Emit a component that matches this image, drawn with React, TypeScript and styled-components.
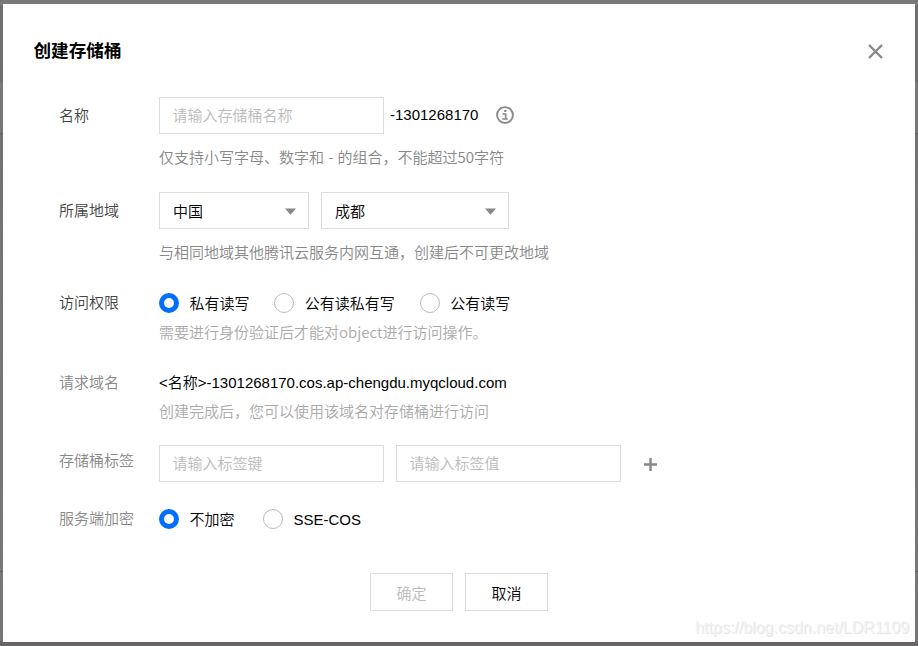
import React, { useState } from "react";
import styled, { createGlobalStyle } from "styled-components";

const GlobalStyle = createGlobalStyle`
  * { box-sizing: border-box; }
  html, body { margin: 0; padding: 0; }
  body {
    font-family: "Liberation Sans", "Noto Sans CJK SC", sans-serif;
    font-size: 15px;
    font-weight: 350;
    line-height: 20px;
    color: #000;
  }
`;

const Backdrop = styled.div`
  width: 918px;
  height: 646px;
  padding: 4px 3px;
  overflow: hidden;
  background: linear-gradient(
    to bottom,
    #777 0, #7b7b7b 6px, #686868 6px, #686868 7px, #707070 7px, #6f6f6f 82px,
    #777 82px, #777 133px, #626262 133px, #626262 134px, #737373 134px,
    #777 571px, #636363 571px, #636363 572px, #777 572px, #757575 641px,
    #656263 642px, #6a6869 646px
  );
`;

const Dialog = styled.section`
  width: 912px;
  height: 638px;
  background: #fff;
  position: relative;
`;

const Header = styled.header`
  display: flex;
  justify-content: space-between;
  align-items: center;
  height: 93px;
  padding: 0 32px 0 30.5px;
`;

const Title = styled.h1`
  margin: 0;
  font-size: 17.6px;
  line-height: 24px;
  font-weight: 700;
`;

const IconButton = styled.button`
  display: flex;
  padding: 1px 0 0;
  border: 0;
  background: none;
  cursor: pointer;
`;

const Form = styled.form`
  padding-left: 56px;
`;

const Row = styled.div<{ $height: number }>`
  display: grid;
  grid-template-columns: 100px 1fr;
  height: ${(p) => p.$height}px;
`;

const Label = styled.div<{ $top: number; $muted?: boolean }>`
  padding-top: ${(p) => p.$top}px;
  color: ${(p) => (p.$muted ? "#888" : "#444")};
`;

const Line = styled.div<{ $height?: number }>`
  display: flex;
  align-items: center;
  height: ${(p) => p.$height ?? 37}px;
`;

const Hint = styled.p<{ $top: number; $light?: boolean }>`
  margin: ${(p) => p.$top}px 0 0;
  font-family: "Noto Sans CJK SC", sans-serif;
  word-spacing: 0.8px;
  color: ${(p) => (p.$light ? "#aaa" : "#888")};
  white-space: nowrap;
`;

const TextInput = styled.input`
  width: 225px;
  height: 37px;
  margin-right: 12px;
  padding: 0 12.5px;
  border: 1px solid #ddd;
  border-radius: 0;
  outline: 0;
  font: inherit;
  &::placeholder { color: #bbb; opacity: 1; }
`;

const Suffix = styled.span`
  width: 106px;
  margin-left: -6px;
  padding-bottom: 2px;
`;

const InfoIcon = styled.svg`
  margin-bottom: 1px;
`;

const Select = styled.div<{ $width: number }>`
  display: flex;
  align-items: center;
  justify-content: space-between;
  width: ${(p) => p.$width}px;
  height: 37px;
  margin-right: 12px;
  padding: 2px 12px 0 13px;
  border: 1px solid #ddd;
`;

const Radio = styled.label<{ $gap: number }>`
  display: flex;
  align-items: center;
  margin-right: ${(p) => p.$gap}px;
  cursor: pointer;
`;

const RadioText = styled.span`
  padding-top: 2px;
`;

const RadioDot = styled.input`
  appearance: none;
  width: 20px;
  height: 20px;
  margin: 0 10.4px 0 0;
  border: 1px solid #bbb;
  border-radius: 50%;
  background: #fff;
  &:checked { border: 5px solid #006eff; }
`;

const Footer = styled.footer`
  display: flex;
  justify-content: center;
  gap: 12px;
`;

const Button = styled.button`
  width: 83px;
  height: 38px;
  padding: 3px 0 0;
  border: 1px solid #ddd;
  background: #fff;
  color: #000;
  font: inherit;
  &:disabled { color: #bbb; }
`;

const Watermark = styled.div`
  position: absolute;
  right: 6px;
  bottom: 4px;
  font-size: 16px;
  line-height: 20px;
  color: #f4f4f4;
  text-shadow: 1px 1px 0 #e6e6e6;
`;

const Arrow = () => (
  <svg width="11" height="7" viewBox="0 0 11 7" fill="#888"><path d="M0 .5h11L5.5 6.7z" /></svg>
);

function RadioGroup({ name, options, gap }: { name: string; options: string[]; gap: number }) {
  const [value, setValue] = useState(options[0]);
  return (
    <>
      {options.map((o) => (
        <Radio key={o} $gap={gap}>
          <RadioDot type="radio" name={name} checked={value === o} onChange={() => setValue(o)} />
          <RadioText>{o}</RadioText>
        </Radio>
      ))}
    </>
  );
}

export default function App() {
  return (
    <Backdrop>
      <GlobalStyle />
      <Dialog>
        <Header>
          <Title>创建存储桶</Title>
          <IconButton aria-label="关闭">
            <svg width="15" height="15" viewBox="0 0 15 15" stroke="#888" strokeWidth="2.4">
              <path d="M1 1l13 13M14 1L1 14" />
            </svg>
          </IconButton>
        </Header>
        <Form onSubmit={(e) => e.preventDefault()}>
          <Row $height={95}>
            <Label $top={9}>名称</Label>
            <div>
              <Line>
                <TextInput placeholder="请输入存储桶名称" />
                <Suffix>-1301268170</Suffix>
                <InfoIcon width="18" height="18" viewBox="0 0 18 18" fill="none" stroke="#888">
                  <circle cx="9" cy="9" r="7.9" strokeWidth="1.9" />
                  <path d="M6.5 8h3.2v5M6.3 13h5.4" strokeWidth="1.7" />
                  <path d="M9.3 4v2" strokeWidth="2.2" />
                </InfoIcon>
              </Line>
              <Hint $top={13}>仅支持小写字母、数字和 - 的组合，不能超过50字符</Hint>
            </div>
          </Row>
          <Row $height={96}>
            <Label $top={9}>所属地域</Label>
            <div>
              <Line>
                <Select $width={150}>中国<Arrow /></Select>
                <Select $width={188}>成都<Arrow /></Select>
              </Line>
              <Hint $top={13}>与相同地域其他腾讯云服务内网互通，创建后不可更改地域</Hint>
            </div>
          </Row>
          <Row $height={80}>
            <Label $top={5}>访问权限</Label>
            <div>
              <Line $height={30}>
                <RadioGroup name="access" gap={25} options={["私有读写", "公有读私有写", "公有读写"]} />
              </Line>
              <Hint $top={4} $light>需要进行身份验证后才能对object进行访问操作。</Hint>
            </div>
          </Row>
          <Row $height={77}>
            <Label $top={5} $muted>请求域名</Label>
            <div>
              <Line $height={30}>&lt;名称&gt;-1301268170.cos.ap-chengdu.myqcloud.com</Line>
              <Hint $top={3} $light>创建完成后，您可以使用该域名对存储桶进行访问</Hint>
            </div>
          </Row>
          <Row $height={59}>
            <Label $top={6} $muted>存储桶标签</Label>
            <Line>
              <TextInput placeholder="请输入标签键" />
              <TextInput placeholder="请输入标签值" />
              <IconButton type="button" aria-label="添加标签">
                <svg width="36" height="13" viewBox="0 0 36 13" stroke="#888" strokeWidth="2.4">
                  <path d="M11 6.5h13M17.5 0v13" />
                </svg>
              </IconButton>
            </Line>
          </Row>
          <Row $height={69}>
            <Label $top={5} $muted>服务端加密</Label>
            <Line $height={30}>
              <RadioGroup name="encryption" gap={28.6} options={["不加密", "SSE-COS"]} />
            </Line>
          </Row>
        </Form>
        <Footer>
          <Button disabled>确定</Button>
          <Button>取消</Button>
        </Footer>
        <Watermark>https://blog.csdn.net/LDR1109</Watermark>
      </Dialog>
    </Backdrop>
  );
}
